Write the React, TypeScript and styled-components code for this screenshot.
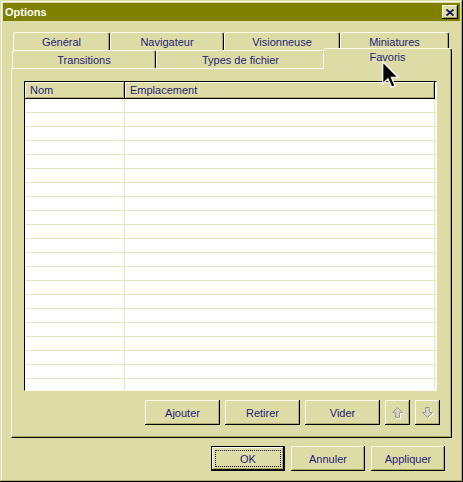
import React from 'react';
import styled, { createGlobalStyle } from 'styled-components';

const FACE = '#dedca6';
const LIGHT = '#fbfaec';
const SHADOW = '#aeab6c';
const DARK = '#000000';
const INK = '#1e1e78';
const GRID = '#e6e4bc';

const GlobalStyle = createGlobalStyle`
  html, body {
    margin: 0;
    padding: 0;
    background: ${FACE};
  }
  body {
    font-family: "Liberation Sans", Arial, sans-serif;
    font-size: 11px;
    color: ${INK};
  }
`;

const Window = styled.div`
  position: relative;
  width: 463px;
  height: 482px;
  box-sizing: border-box;
  padding: 3px;
  background: ${FACE};
  box-shadow: inset -1px -1px 0 ${DARK}, inset 1px 1px 0 ${FACE},
    inset -2px -2px 0 ${SHADOW}, inset 2px 2px 0 ${LIGHT};
  display: flex;
  flex-direction: column;
`;

const TitleBar = styled.div`
  height: 18px;
  background: #808000;
  color: #ffffff;
  font-weight: 700;
  font-size: 11px;
  display: flex;
  align-items: center;
  justify-content: space-between;
  padding: 0 2px 0 2px;
`;

const CloseButton = styled.div`
  width: 16px;
  height: 14px;
  background: ${FACE};
  box-shadow: inset -1px -1px 0 ${DARK}, inset 1px 1px 0 ${LIGHT},
    inset -2px -2px 0 ${SHADOW};
  display: flex;
  align-items: center;
  justify-content: center;
`;

const Content = styled.div`
  flex: 1;
  display: flex;
  flex-direction: column;
  padding: 11px 8px 0 8px;
`;

const TabRow = styled.div<{ $indent: number }>`
  display: flex;
  height: 18px;
  padding-left: ${(p) => p.$indent}px;
`;

const Tab = styled.div<{ $w: number; $active?: boolean }>`
  width: ${(p) => p.$w}px;
  height: ${(p) => (p.$active ? 21 : 18)}px;
  margin: ${(p) => (p.$active ? '-2px -2px -1px -2px' : '0')};
  position: relative;
  z-index: ${(p) => (p.$active ? 2 : 0)};
  box-sizing: border-box;
  background: ${FACE};
  border-top: 1px solid ${LIGHT};
  border-left: 1px solid ${LIGHT};
  border-right: 1px solid ${DARK};
  border-radius: 3px 3px 0 0;
  box-shadow: inset -1px 0 0 ${SHADOW};
  display: flex;
  justify-content: center;
  align-items: ${(p) => (p.$active ? 'flex-start' : 'center')};
  padding-top: ${(p) => (p.$active ? 2 : 0)}px;
  white-space: nowrap;
`;

const Panel = styled.div`
  height: 370px;
  box-sizing: border-box;
  border-top: 1px solid ${LIGHT};
  border-left: 1px solid ${LIGHT};
  border-right: 1px solid ${DARK};
  border-bottom: 1px solid ${DARK};
  box-shadow: inset -1px -1px 0 ${SHADOW};
  padding: 12px 11px 12px 12px;
  display: flex;
  flex-direction: column;
  gap: 9px;
  position: relative;
  z-index: 1;
`;

const ListView = styled.div`
  height: 310px;
  box-sizing: border-box;
  margin-right: 3px;
  border: 1px solid;
  border-color: ${DARK} ${LIGHT} ${LIGHT} ${DARK};
  background: #ffffff;
  overflow: hidden;
  display: flex;
  flex-direction: column;
`;

const HeaderRow = styled.div`
  display: flex;
  height: 17px;
  flex-shrink: 0;
`;

const HeaderCell = styled.div<{ $w: number }>`
  width: ${(p) => p.$w}px;
  box-sizing: border-box;
  background: ${FACE};
  border-right: 1px solid ${DARK};
  border-bottom: 1px solid ${DARK};
  box-shadow: inset 1px 1px 0 ${LIGHT}, inset -1px -1px 0 ${SHADOW};
  padding-left: 5px;
  display: flex;
  align-items: center;
`;

const Row = styled.div`
  display: flex;
  height: 14px;
  flex-shrink: 0;
  box-sizing: border-box;
  border-bottom: 1px solid ${GRID};
`;

const Cell = styled.div<{ $w: number }>`
  width: ${(p) => p.$w}px;
  box-sizing: border-box;
  border-right: 1px solid ${GRID};
`;

const ButtonRow = styled.div<{ $gap: number; $right: number }>`
  display: flex;
  justify-content: flex-end;
  gap: ${(p) => p.$gap}px;
  margin-right: ${(p) => p.$right}px;
`;

const Button = styled.div<{ $w: number; $default?: boolean }>`
  position: relative;
  width: ${(p) => p.$w}px;
  height: 25px;
  box-sizing: border-box;
  background: ${FACE};
  color: ${INK};
  display: flex;
  align-items: center;
  justify-content: center;
  box-shadow: ${(p) =>
    p.$default
      ? `inset 0 0 0 1px ${DARK}, inset -2px -2px 0 ${DARK}, inset 2px 2px 0 ${LIGHT}, inset -3px -3px 0 ${SHADOW}`
      : `inset -1px -1px 0 ${DARK}, inset 1px 1px 0 ${LIGHT}, inset -2px -2px 0 ${SHADOW}`};
`;

const FocusRing = styled.div`
  position: absolute;
  inset: 4px 4px 4px 4px;
  border: 1px dotted ${DARK};
`;

const Footer = styled.div`
  margin-top: 8px;
`;

const Cursor = styled.svg`
  position: absolute;
  left: 382px;
  top: 61px;
  z-index: 5;
`;

const UpArrow = () => (
  <svg width="13" height="13" viewBox="0 0 13 13">
    <path d="M7.5 2.5 L12.5 7.5 L9.5 7.5 L9.5 12.5 L5.5 12.5 L5.5 7.5 L2.5 7.5 Z" fill="none" stroke="#ffffff" />
    <path d="M6.5 1.5 L11.5 6.5 L8.5 6.5 L8.5 11.5 L4.5 11.5 L4.5 6.5 L1.5 6.5 Z" fill="#d4d3c4" stroke="#9c9b90" />
  </svg>
);

const DownArrow = () => (
  <svg width="13" height="13" viewBox="0 0 13 13">
    <path d="M7.5 12.5 L12.5 7.5 L9.5 7.5 L9.5 2.5 L5.5 2.5 L5.5 7.5 L2.5 7.5 Z" fill="none" stroke="#ffffff" />
    <path d="M6.5 11.5 L11.5 6.5 L8.5 6.5 L8.5 1.5 L4.5 1.5 L4.5 6.5 L1.5 6.5 Z" fill="#d4d3c4" stroke="#9c9b90" />
  </svg>
);

const rows = Array.from({ length: 21 }, (_, i) => i);

export default function App() {
  return (
    <>
      <GlobalStyle />
      <Window>
        <TitleBar>
          <span>Options</span>
          <CloseButton>
            <svg width="8" height="7" viewBox="0 0 8 7">
              <path d="M0.5 0.5 L7.5 6.5 M7.5 0.5 L0.5 6.5" stroke="#14145e" strokeWidth="1.8" />
            </svg>
          </CloseButton>
        </TitleBar>
        <Content>
          <TabRow $indent={2}>
            <Tab $w={97}>Général</Tab>
            <Tab $w={114}>Navigateur</Tab>
            <Tab $w={116}>Visionneuse</Tab>
            <Tab $w={109}>Miniatures</Tab>
          </TabRow>
          <TabRow $indent={1}>
            <Tab $w={144}>Transitions</Tab>
            <Tab $w={169}>Types de fichier</Tab>
            <Tab $w={129} $active>
              Favoris
            </Tab>
          </TabRow>
          <Panel>
            <ListView>
              <HeaderRow>
                <HeaderCell $w={100}>Nom</HeaderCell>
                <HeaderCell $w={310}>Emplacement</HeaderCell>
              </HeaderRow>
              {rows.map((r) => (
                <Row key={r}>
                  <Cell $w={100} />
                  <Cell $w={310} />
                </Row>
              ))}
            </ListView>
            <ButtonRow $gap={5} $right={0}>
              <Button $w={75}>Ajouter</Button>
              <Button $w={75}>Retirer</Button>
              <Button $w={75}>Vider</Button>
              <Button $w={25}>
                <UpArrow />
              </Button>
              <Button $w={25}>
                <DownArrow />
              </Button>
            </ButtonRow>
          </Panel>
          <Footer>
            <ButtonRow $gap={6} $right={7}>
              <Button $w={74} $default>
                <FocusRing />
                OK
              </Button>
              <Button $w={74}>Annuler</Button>
              <Button $w={74}>Appliquer</Button>
            </ButtonRow>
          </Footer>
        </Content>
        <Cursor width="18" height="28" viewBox="0 0 13 20">
          <path d="M0.5 0.5 L0.5 16.5 L4.3 12.8 L7 18.8 L9.4 17.8 L6.8 11.8 L11.8 11.8 Z" fill="#000000" stroke="#ffffff" strokeWidth="0.9" />
        </Cursor>
      </Window>
    </>
  );
}
